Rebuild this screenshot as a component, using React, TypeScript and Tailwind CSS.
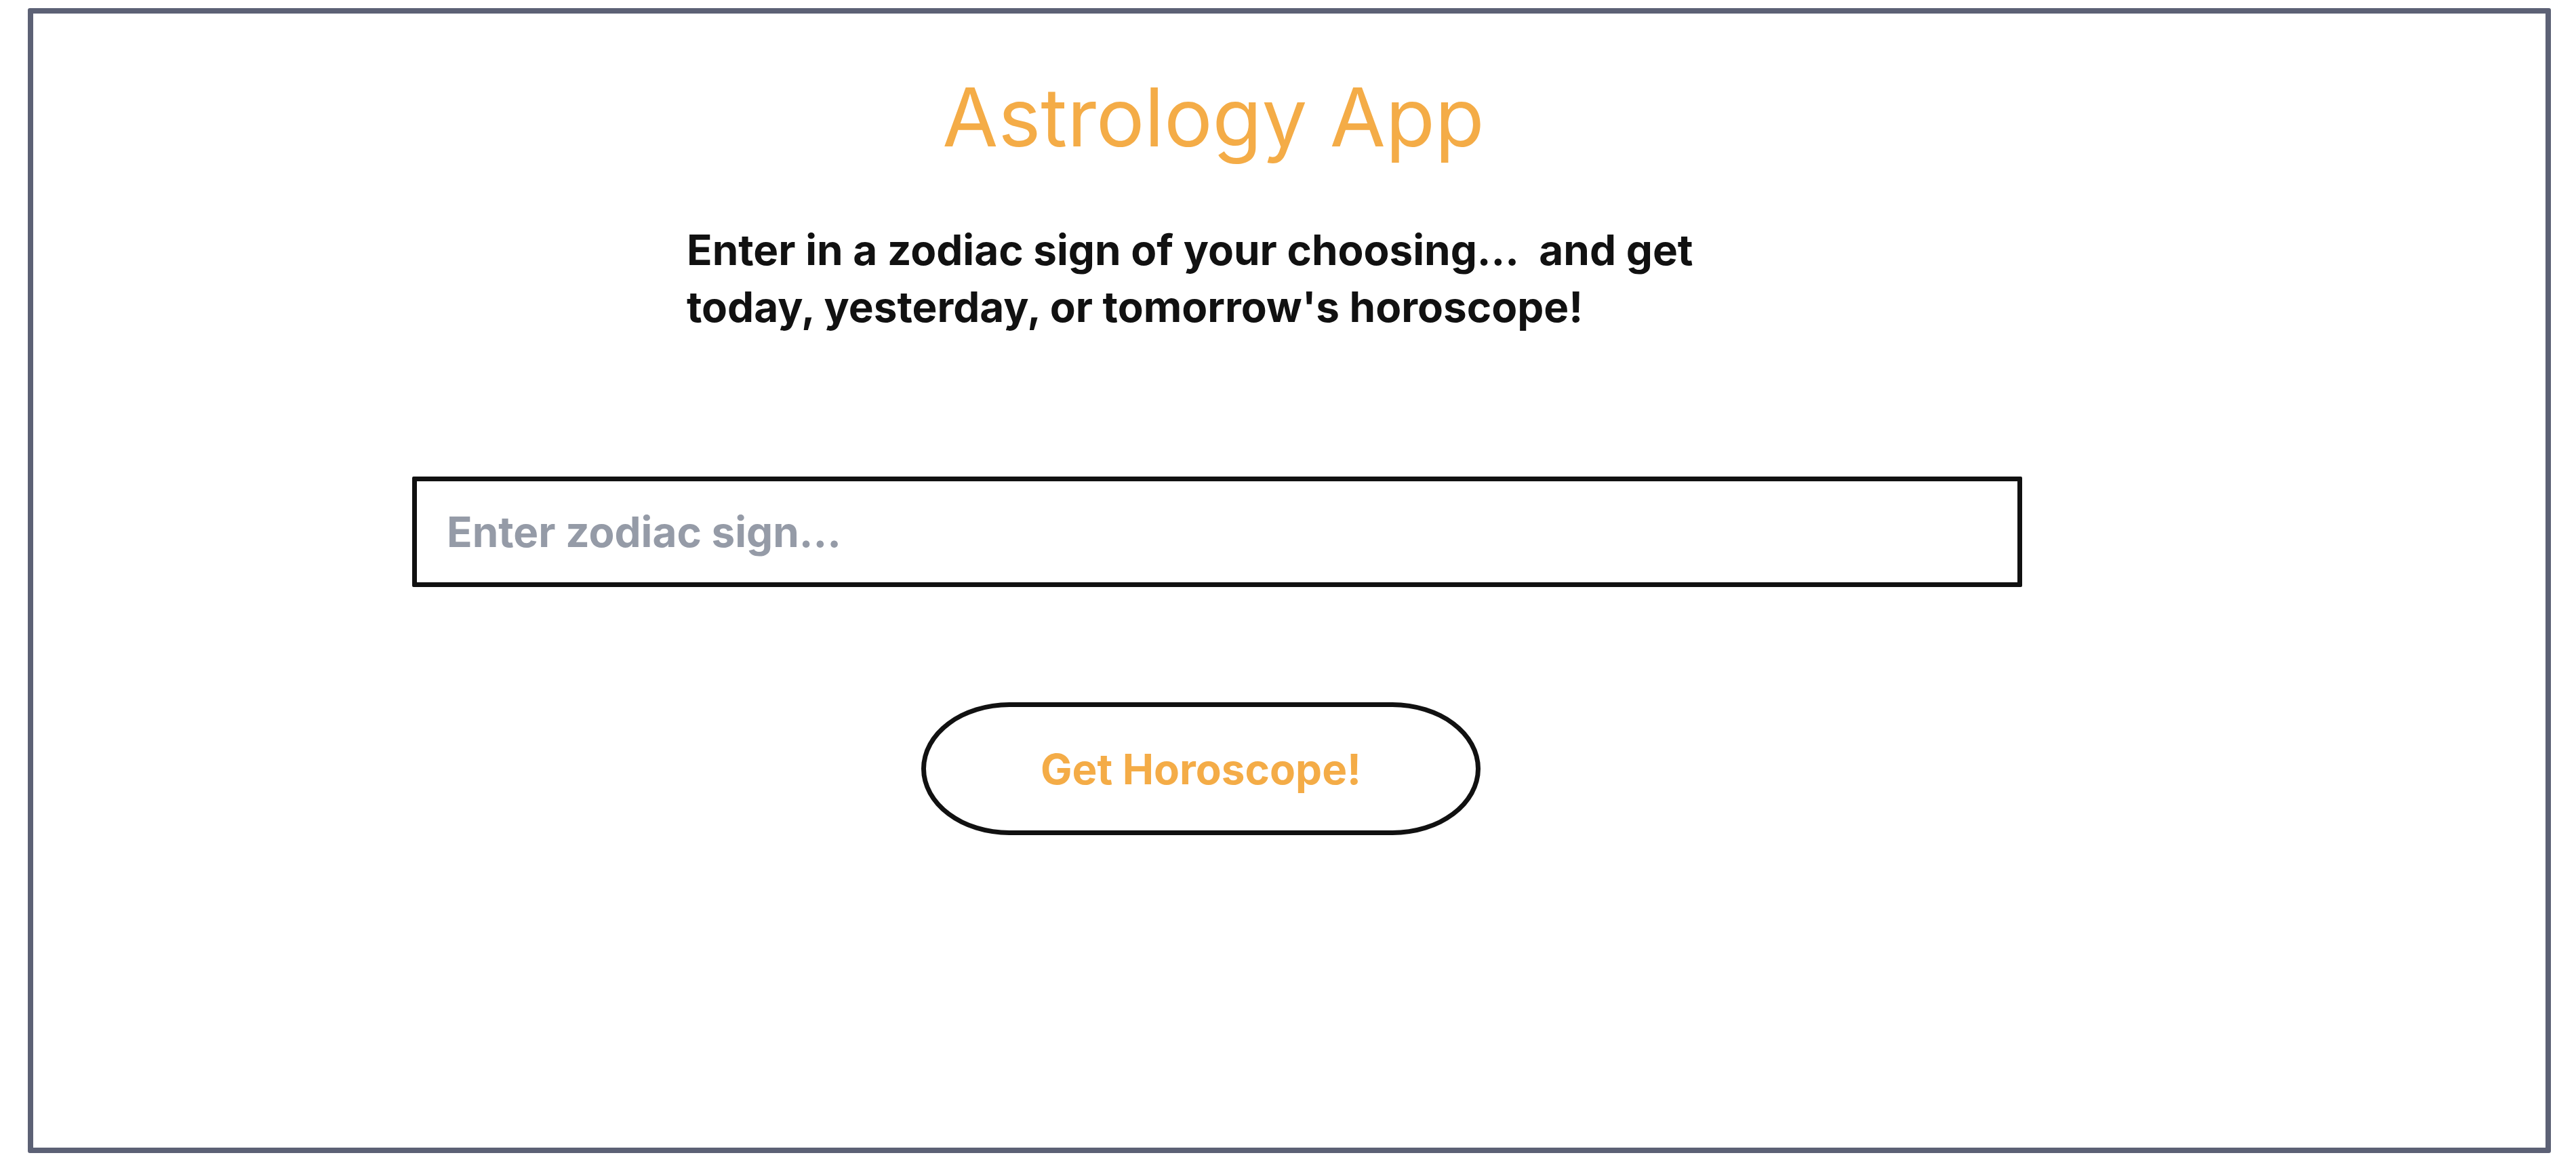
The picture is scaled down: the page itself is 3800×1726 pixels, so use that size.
/**
 * Astrology App landing card: title, prompt copy, sign input and submit button.
 * Static layout only — no fetching happens here.
 */
import { useState } from "react";

export default function App() {
  const [sign, setSign] = useState("");

  return (
    <div className="min-h-screen bg-white font-['Inter','Liberation_Sans',Arial,sans-serif]">
      {/* Outer frame */}
      <div className="ml-[41px] mt-[12px] h-[1689px] w-[3722px] rounded-[3px] border-8 border-[#5c6175]">
        <main className="flex w-[3482px] flex-col">
          <h1 className="mt-[94px] text-center text-[119px] leading-none text-[#f4ac47]">
            Astrology App
          </h1>

          <p className="mx-auto mt-[94px] w-[1554px] text-[62px] font-bold leading-[84px] text-[#111111]">
            Enter in a zodiac sign of your choosing...&nbsp; and get today, yesterday, or tomorrow's horoscope!
          </p>

          <input
            type="text"
            value={sign}
            onChange={(e) => setSign(e.target.value)}
            placeholder="Enter zodiac sign..."
            className="ml-[559px] mt-[208px] box-border h-[163px] w-[2375px] rounded-[2px] border-[7px] border-[#111111] bg-white pl-[44px] text-[62px] font-bold text-[#111111] outline-none placeholder:text-[#959ba7]"
          />

          <button
            type="button"
            className="ml-[1310px] mt-[170px] box-border flex h-[196px] w-[825px] items-center justify-center rounded-[130px/98px] border-[7px] border-[#111111] bg-white text-[62px] font-bold text-[#f4ac47]"
          >
            Get Horoscope!
          </button>
        </main>
      </div>
    </div>
  );
}
